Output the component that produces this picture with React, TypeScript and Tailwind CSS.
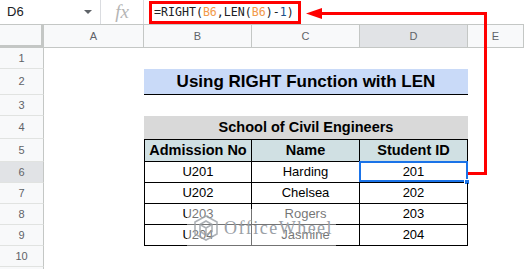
import React from 'react';

const COLS = ['A', 'B', 'C', 'D', 'E'];

const DATA = [
  { id: 'U201', name: 'Harding', student: '201' },
  { id: 'U202', name: 'Chelsea', student: '202' },
  { id: 'U203', name: 'Rogers', student: '203' },
  { id: 'U204', name: 'Jasmine', student: '204' },
];

const RowHead: React.FC<{ n?: number; active?: boolean }> = ({ n, active }) => (
  <div
    className={`flex items-center justify-center border-r border-b border-r-[#c4c7c5] border-b-[#e1e3e1] text-[11px] text-[#5f6368] ${
      active ? 'bg-[#e1e3e6]' : 'bg-[#f8f9fa]'
    }`}
  >
    {n}
  </div>
);

const Empty = ({ span }: { span?: boolean }) => <div className={span ? 'col-span-5' : ''} />;

export default function App() {
  return (
    <div
      className="relative w-[524px] h-[269px] overflow-hidden bg-white text-black"
      style={{ fontFamily: '"Liberation Sans", Arial, sans-serif' }}
    >
      {/* Formula bar */}
      <div className="flex h-[25px] border-b border-[#c4c7c5] bg-white">
        <div className="flex w-[101px] items-center justify-between border-r border-[#dadce0] pl-[7px] pr-[8px] text-[13px] text-[#202124]">
          <span>D6</span>
          <span className="h-0 w-0 border-x-[4px] border-t-[4px] border-x-transparent border-t-[#5f6368]" />
        </div>
        <div
          className="flex w-[43px] items-center justify-center border-r border-[#dadce0] text-[19px] italic text-[#b5b5b5]"
          style={{ fontFamily: '"Liberation Serif", serif' }}
        >
          fx
        </div>
        <div className="flex items-start pl-[5px] pt-[1px]">
          <div
            className="flex h-[23px] items-center border-[3px] border-[#ff0000] pl-[2px] pr-[4px] text-[11.6px] text-[#202124]"
            style={{ fontFamily: '"DejaVu Sans Mono", monospace' }}
          >
            <span>=RIGHT(</span>
            <span className="text-[#f29a4a]">B6</span>
            <span>,LEN(</span>
            <span className="text-[#f29a4a]">B6</span>
            <span>)-</span>
            <span className="text-[#1c4f8a]">1</span>
            <span>)</span>
          </div>
        </div>
      </div>

      {/* Sheet grid */}
      <div className="grid grid-cols-[44px_100px_108px_108px_108px_56px] grid-rows-[23px_21px_26px_21px_23px_23px_21px_21px_21px_21px_21px_21px]">
        {/* column headers */}
        <div className="border-r-[3px] border-b-[3px] border-[#c4c7c5] bg-[#f8f9fa]" />
        {COLS.map((c) => (
          <div
            key={c}
            className={`flex items-center justify-center border-r border-b border-[#c4c7c5] text-[11px] text-[#5f6368] ${
              c === 'D' ? 'bg-[#e1e3e6]' : 'bg-[#f8f9fa]'
            }`}
          >
            {c}
          </div>
        ))}

        {/* row 1 */}
        <RowHead n={1} />
        <Empty span />

        {/* row 2: title */}
        <RowHead n={2} />
        <div />
        <div className="col-span-3 flex items-center justify-center border-b border-black bg-[#c9daf8] text-[17px] font-bold">
          Using RIGHT Function with LEN
        </div>
        <div />

        {/* row 3 */}
        <RowHead n={3} />
        <Empty span />

        {/* row 4 */}
        <RowHead n={4} />
        <div />
        <div className="col-span-3 flex items-center justify-center bg-[#d9d9d9] text-[14.5px] font-bold">
          School of Civil Engineers
        </div>
        <div />

        {/* row 5: headers */}
        <RowHead n={5} />
        <div />
        {['Admission No', 'Name', 'Student ID'].map((h, i) => (
          <div
            key={h}
            className={`flex items-center justify-center border-y border-r border-black bg-[#d0e0e3] text-[14.5px] font-bold ${
              i === 0 ? 'border-l' : ''
            }`}
          >
            {h}
          </div>
        ))}
        <div />

        {/* data rows */}
        {DATA.map((row, idx) => (
          <React.Fragment key={row.id}>
            <RowHead n={6 + idx} active={idx === 0} />
            <div />
            <div className="flex items-center justify-center border-x border-b border-black text-[13px]">{row.id}</div>
            <div className="flex items-center justify-center border-r border-b border-black text-[13px]">{row.name}</div>
            <div className="relative flex items-center justify-center border-r border-b border-black text-[13px]">
              {row.student}
              {idx === 0 && (
                <>
                  <div className="absolute -top-px -left-px -right-px bottom-0 border-2 border-[#1a73e8]" />
                  <div className="absolute -bottom-[3px] -right-[3px] h-[6px] w-[6px] border border-white bg-[#1a73e8]" />
                </>
              )}
            </div>
            <div />
          </React.Fragment>
        ))}

        {/* row 10 and the edge of row 11 */}
        <RowHead n={10} />
        <Empty span />
        <RowHead />
        <Empty span />
      </div>

      {/* watermark */}
      <div className="pointer-events-none absolute left-[187px] top-[209px] flex h-[38px] w-[149px] items-center gap-[5px] bg-white/45 pl-[6px]">
        <svg width="26" height="28" viewBox="0 0 26 28" fill="none" stroke="#9aa0a6" strokeWidth="1.6" opacity="0.8">
          <path d="M13 2 L24 8 L24 20 L13 26 L2 20 L2 8 Z" />
          <path d="M13 7 L19 10.5 L19 17.5 L13 21 L7 17.5 L7 10.5 Z" />
          <path d="M13 14 L19 10.5 M13 14 L7 10.5 M13 14 L13 21" />
        </svg>
        <span
          className="text-[18px] tracking-[1.5px] text-[#9aa0a6]"
          style={{ fontFamily: '"Liberation Serif", serif' }}
        >
          OfficeWheel
        </span>
      </div>

      {/* red annotation arrow */}
      <svg className="pointer-events-none absolute inset-0" width="524" height="269" viewBox="0 0 524 269">
        <polyline
          points="468,173.5 485.5,173.5 485.5,13.5 318,13.5"
          fill="none"
          stroke="#ff0000"
          strokeWidth="3"
        />
        <polygon points="306,13.5 322,8 322,19" fill="#ff0000" />
      </svg>
    </div>
  );
}
